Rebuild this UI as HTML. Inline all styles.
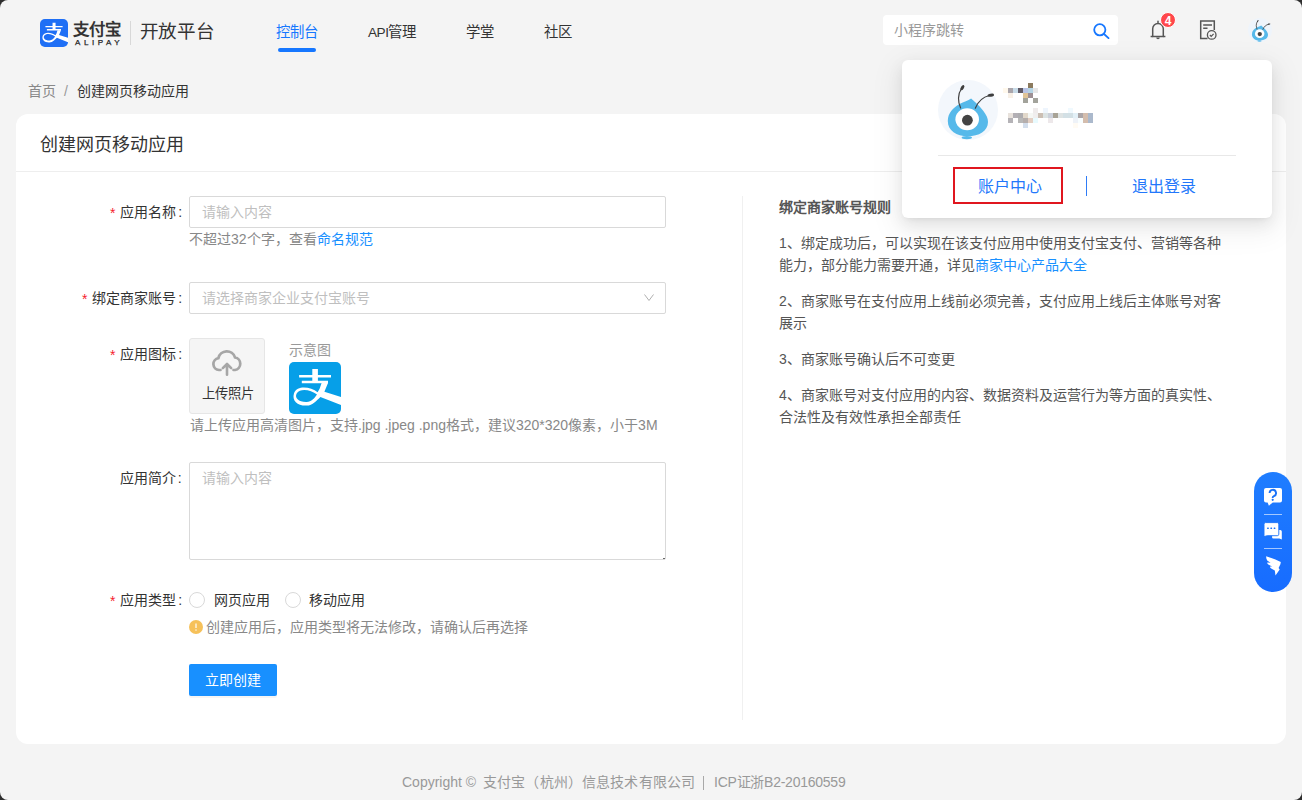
<!DOCTYPE html>
<html lang="zh-CN">
<head>
<meta charset="utf-8">
<style>
*{box-sizing:border-box;margin:0;padding:0}
html,body{width:1302px;height:800px;overflow:hidden;background:#2e2e2e}
body{font-family:"Liberation Sans",sans-serif;color:#333;font-size:14px;line-height:1}
#frame{position:absolute;left:0;top:0;width:1302px;height:800px;background:#f4f4f4;border-radius:8px;overflow:hidden}
.abs{position:absolute;white-space:nowrap}
/* header */
.logo-ic{left:40px;top:19px;width:28px;height:28px}
.logo-zfb{left:73px;top:20.5px;font-size:16.4px;letter-spacing:0.2px;font-weight:bold;color:#333}
.logo-ali{left:75px;top:38.5px;font-size:8px;color:#222;letter-spacing:3.55px;-webkit-text-stroke:0.25px #222}
.logo-sep{left:130px;top:21px;width:1px;height:24px;background:#d8d8d8}
.logo-kf{left:139.5px;top:22.8px;font-size:18.6px;letter-spacing:-0.2px;color:#333}
.nav{top:24.5px;font-size:14.4px;color:#333}
.nav.on{color:#1677ff}
.nav-ul{left:278px;top:48px;width:38px;height:4px;border-radius:2px;background:#1677ff}
.search{left:883px;top:15px;width:235px;height:30px;background:#fff;border-radius:4px}
.search .ph{position:absolute;left:11px;top:8px;font-size:14px;color:#999}
/* card */
.card{left:16px;top:114px;width:1270px;height:630px;background:#fff;border-radius:12px}
.card-title{left:40px;top:136px;font-size:18px;color:#333}
.card-div{left:16px;top:171px;width:1270px;height:1px;background:#eee}
.lbl{font-size:14px;color:#333;text-align:right}
.col{font-weight:normal;margin-left:1.8px}
.req{color:#f5222d;font-size:14px;position:relative;top:1px;margin-right:1px}
.input{left:189px;width:477px;height:32px;border:1px solid #d9d9d9;border-radius:2px;background:#fff}
.input .ph{position:absolute;left:12px;top:8px;font-size:14px;color:#bfbfbf}
.help{font-size:14px;color:#888}
.link{color:#1890ff}
.vdiv{left:742px;top:196px;width:1px;height:524px;background:#f0f0f0}
.rt{left:779px;font-size:14px;color:#555}
.foot{left:402px;top:775px;font-size:14px;color:#999}
/* popup */
.pop{left:902px;top:60px;width:370px;height:158px;background:#fff;border-radius:6px;box-shadow:0 6px 16px 0 rgba(0,0,0,.08),0 3px 6px -4px rgba(0,0,0,.12),0 9px 28px 8px rgba(0,0,0,.05)}
.side{left:1254px;top:472px;width:38px;height:120px;border-radius:19px;background:linear-gradient(180deg,#1f7dff,#176cff)}
</style>
</head>
<body>
<div id="frame">
  <!-- header -->
  <svg class="abs logo-ic" viewBox="0 0 52 52"><rect width="52" height="52" rx="9" fill="#1f6ff5"/><path d="M10.1 13.1H42v2.3H10.1zM23.3 7.1h5.6v12h-5.6zM12.8 18.8H39v2.4H12.8z" fill="#fff"/><path d="M32.6 21H39L35.4 29.8 52 34.9V43.1L31.4 34.9C27.5 38.5 24 43.3 17.5 43.6 9 44 2.5 39 5 31.2 8.5 22.5 22 25 28.6 30.2L30.6 26.8zM28 32.6C22 27.8 11.5 26 7.8 31.2 5 35.8 10 40.3 17.7 40 22.5 39.8 25.5 36.3 28 32.6z" fill="#fff" fill-rule="evenodd"/></svg>
  <div class="abs logo-zfb">支付宝</div>
  <div class="abs logo-ali">ALIPAY</div>
  <div class="abs logo-sep"></div>
  <div class="abs logo-kf">开放平台</div>
  <div class="abs nav on" style="left:276px">控制台</div>
  <div class="abs nav-ul"></div>
  <div class="abs nav" style="left:368px"><span style="letter-spacing:-0.5px;font-size:13.6px">API</span>管理</div>
  <div class="abs nav" style="left:466px">学堂</div>
  <div class="abs nav" style="left:544px">社区</div>
  <div class="abs search"><span class="ph">小程序跳转</span>
    <svg style="position:absolute;left:210px;top:8px" width="17" height="16" viewBox="0 0 17 16"><circle cx="6.8" cy="6.8" r="5.6" fill="none" stroke="#1677ff" stroke-width="1.8"/><path d="M11 11l4.5 4.2" stroke="#1677ff" stroke-width="1.8" stroke-linecap="round"/></svg>
  </div>


  <svg class="abs" style="left:1149px;top:19px" width="18" height="22" viewBox="0 0 18 22"><path d="M9 2.2v1.6M3.7 17.5V9.8a5.3 5.3 0 0 1 10.6 0V17.5" fill="none" stroke="#555" stroke-width="1.5" stroke-linecap="round"/><path d="M1.6 17.5h14.8" stroke="#555" stroke-width="1.5"/><path d="M7.2 18.5a1.8 1.8 0 0 0 3.6 0z" fill="#555"/></svg>
  <div class="abs" style="left:1160px;top:12px;width:16px;height:16px;border-radius:50%;background:#ff474b;border:1px solid #fff;color:#fff;font-size:12px;font-weight:bold;text-align:center;line-height:16.5px">4</div>
  <svg class="abs" style="left:1199px;top:19px" width="19" height="22" viewBox="0 0 19 22"><path d="M8.5 19.5H1.7V2h13.6v9" fill="none" stroke="#555" stroke-width="1.5"/><path d="M4.2 5.9h8.8M4.2 9.2h4.3" stroke="#555" stroke-width="1.5"/><circle cx="12.7" cy="15.9" r="4.3" fill="#f4f4f4" stroke="#555" stroke-width="1.3"/><path d="M10.9 16l1.3 1.3 2.4-2.5" fill="none" stroke="#555" stroke-width="1.2"/></svg>
  <svg class="abs" style="left:1248px;top:18px" width="24" height="24" viewBox="0 0 60 60"><circle cx="30" cy="30" r="30" fill="#eef4fb"/><path d="M33.1 18.6C36 21.5 41 25 45 30.5C48.5 35 50 38 50 42C50 51 41 56.3 29.8 56.3C18.5 56.3 9.8 50.5 9.8 41C9.8 33 15 28 21.5 24C26 21.7 30 21 33.1 18.6Z" fill="#56b9ea"/><ellipse cx="28.8" cy="57.6" rx="5.2" ry="1.7" fill="#56b9ea"/><path d="M22.6 28C19.8 22 19.6 14 23.3 9" fill="none" stroke="#3f3f3f" stroke-width="2" stroke-linecap="round"/><path d="M37.3 28.2C40 21.5 45 17 51.5 15.5" fill="none" stroke="#3f3f3f" stroke-width="2" stroke-linecap="round"/><ellipse cx="24.4" cy="7.6" rx="1.5" ry="2.9" transform="rotate(32 24.4 7.6)" fill="#3f3f3f"/><ellipse cx="52.8" cy="15.2" rx="3.3" ry="1.5" transform="rotate(-10 52.8 15.2)" fill="#3f3f3f"/><ellipse cx="29.2" cy="39.2" rx="11.8" ry="11" fill="#fff"/><circle cx="29.4" cy="40.2" r="5.4" fill="#434343"/></svg>
  <!-- breadcrumb -->
  <div class="abs" style="left:28px;top:84px;font-size:14px;color:#888">首页</div>
  <div class="abs" style="left:64px;top:84px;font-size:14px;color:#999">/</div>
  <div class="abs" style="left:77px;top:84px;font-size:14px;color:#333">创建网页移动应用</div>

  <!-- card -->
  <div class="abs card"></div>
  <div class="abs card-title">创建网页移动应用</div>
  <div class="abs card-div"></div>

  <div class="abs lbl" style="left:110px;top:205px"><span class="req">*</span> 应用名称<b class="col">:</b></div>
  <div class="abs input" style="top:196px"><span class="ph">请输入内容</span></div>
  <div class="abs help" style="left:189px;top:232px">不超过32个字，查看<span class="link">命名规范</span></div>

  <div class="abs lbl" style="left:82px;top:291px"><span class="req">*</span> 绑定商家账号<b class="col">:</b></div>
  <div class="abs input" style="top:282px"><span class="ph">请选择商家企业支付宝账号</span><svg style="position:absolute;left:453px;top:9px" width="12" height="10" viewBox="0 0 12 10"><path d="M1.5 2.5L6 8.5L10.5 2.5" fill="none" stroke="#b0b0b0" stroke-width="1"/></svg></div>

  <div class="abs lbl" style="left:110px;top:347px"><span class="req">*</span> 应用图标<b class="col">:</b></div>

  <div class="abs lbl" style="left:120px;top:471px">应用简介<b class="col">:</b></div>
  <div class="abs input" style="top:462px;height:98px"><span class="ph">请输入内容</span><i style="position:absolute;left:473px;top:94.5px;width:1.5px;height:1.5px;border-radius:50%;background:#555"></i></div>

  <div class="abs lbl" style="left:110px;top:593px"><span class="req">*</span> 应用类型<b class="col">:</b></div>

  <div class="abs" style="left:189px;top:664px;width:88px;height:32px;background:#1890ff;border-radius:2px;box-shadow:0 2px 0 rgba(0,0,0,0.04);color:#fff;font-size:14px;text-align:center;line-height:32px">立即创建</div>


  <div class="abs" style="left:189px;top:338px;width:76px;height:76px;background:#f5f5f5;border:1px solid #e6e6e6;border-radius:3px"></div>
  <svg class="abs" style="left:211px;top:350px" width="32" height="27" viewBox="0 0 32 27"><path d="M9.5 20H8a6 6 0 0 1-.6-11.9A8.6 8.6 0 0 1 24 7.4a6.4 6.4 0 0 1 0 12.6h-1.5" fill="none" stroke="#a6a6a6" stroke-width="2.7" stroke-linecap="round"/><path d="M16 24.8V14M11.8 18.2l4.2-4.2 4.2 4.2" fill="none" stroke="#a6a6a6" stroke-width="2.6" stroke-linecap="round" stroke-linejoin="round"/></svg>
  <div class="abs" style="left:201.5px;top:386.5px;font-size:13.3px;color:#333">上传照片</div>
  <div class="abs" style="left:289px;top:343px;font-size:14px;color:#999">示意图</div>
  <svg class="abs" style="left:289px;top:362px" width="52" height="52" viewBox="0 0 52 52"><rect width="52" height="52" rx="5" fill="#069fe8"/><path d="M10.1 13.1H42v2.3H10.1zM23.3 7.1h5.6v12h-5.6zM12.8 18.8H39v2.4H12.8z" fill="#fff"/><path d="M32.6 21H39L35.4 29.8 52 34.9V43.1L31.4 34.9C27.5 38.5 24 43.3 17.5 43.6 9 44 2.5 39 5 31.2 8.5 22.5 22 25 28.6 30.2L30.6 26.8zM28 32.6C22 27.8 11.5 26 7.8 31.2 5 35.8 10 40.3 17.7 40 22.5 39.8 25.5 36.3 28 32.6z" fill="#fff" fill-rule="evenodd"/></svg>
  <div class="abs help" style="left:190px;top:418px">请上传应用高清图片，支持.jpg .jpeg .png格式，建议320*320像素，小于3M</div>

  <div class="abs" style="left:189px;top:592px;width:16px;height:16px;border:1px solid #d9d9d9;border-radius:50%;background:#fff"></div>
  <div class="abs" style="left:214px;top:593px;font-size:14px;color:#333">网页应用</div>
  <div class="abs" style="left:285px;top:592px;width:16px;height:16px;border:1px solid #d9d9d9;border-radius:50%;background:#fff"></div>
  <div class="abs" style="left:309px;top:593px;font-size:14px;color:#333">移动应用</div>
  <svg class="abs" style="left:189px;top:620px" width="14" height="14" viewBox="0 0 14 14"><circle cx="7" cy="7" r="7" fill="#f6c15a"/><path d="M7 3.6v4.4" stroke="#fff" stroke-opacity="0.8" stroke-width="1.5"/><circle cx="7" cy="10.1" r="0.8" fill="#fff" fill-opacity="0.8"/></svg>
  <div class="abs help" style="left:206px;top:620px">创建应用后，应用类型将无法修改，请确认后再选择</div>
  <div class="abs vdiv"></div>
  <div class="abs rt" style="top:200px;font-weight:bold">绑定商家账号规则</div>


  <div class="abs rt" style="top:236px">1、绑定成功后，可以实现在该支付应用中使用支付宝支付、营销等各种</div>
  <div class="abs rt" style="top:258px">能力，部分能力需要开通，详见<span class="link">商家中心产品大全</span></div>
  <div class="abs rt" style="top:294px">2、商家账号在支付应用上线前必须完善，支付应用上线后主体账号对客</div>
  <div class="abs rt" style="top:316px">展示</div>
  <div class="abs rt" style="top:352px">3、商家账号确认后不可变更</div>
  <div class="abs rt" style="top:388px">4、商家账号对支付应用的内容、数据资料及运营行为等方面的真实性、</div>
  <div class="abs rt" style="top:410px">合法性及有效性承担全部责任</div>
  <div class="abs foot" style="left:402px">Copyright ©</div>
  <div class="abs foot" style="left:483px;letter-spacing:0.14px">支付宝（杭州）信息技术有限公司</div>
  <div class="abs" style="left:703px;top:776px;width:1px;height:14px;background:#a8a8a8"></div>
  <div class="abs foot" style="left:714px;letter-spacing:-0.25px">ICP证浙B2-20160559</div>

  <!-- side widget -->
  <div class="abs side">
    <svg style="position:absolute;left:10px;top:16px" width="18" height="18" viewBox="0 0 18 18"><path d="M2 0h14a2 2 0 0 1 2 2v10.4a2 2 0 0 1-2 2H8.8L4.9 17.7 3.6 14.4H2a2 2 0 0 1-2-2V2a2 2 0 0 1 2-2z" fill="#fff"/><path d="M5.6 5a3.2 3.2 0 1 1 4.4 3c-.9.4-1.3.8-1.3 1.7v.4" fill="none" stroke="#1a72f8" stroke-width="1.9"/><circle cx="8.7" cy="11.8" r="1.1" fill="#1a72f8"/></svg>
    <div style="position:absolute;left:10px;top:42px;width:18px;height:1px;background:rgba(255,255,255,0.6)"></div>
    <svg style="position:absolute;left:10px;top:50px" width="19" height="19" viewBox="0 0 19 19"><path d="M9.5 8h6.8A1.5 1.5 0 0 1 17.8 9.5V17.6l-2.4-1.2H9.5A1.5 1.5 0 0 1 8 14.9z" fill="#fff"/><path d="M1.5 0.6h11.8a1.5 1.5 0 0 1 1.5 1.5v10.1a1.5 1.5 0 0 1-1.5 1.5H3.2L0 14.6V2.1A1.5 1.5 0 0 1 1.5 0.6z" fill="#fff" stroke="#1a72f8" stroke-width="0.9"/><rect x="3.1" y="5.5" width="1.7" height="1.6" rx="0.5" fill="#1a72f8"/><rect x="6.4" y="5.5" width="1.7" height="1.6" rx="0.5" fill="#1a72f8"/><rect x="9.7" y="5.5" width="1.7" height="1.6" rx="0.5" fill="#1a72f8"/></svg>
    <div style="position:absolute;left:10px;top:76px;width:18px;height:1px;background:rgba(255,255,255,0.6)"></div>
    <svg style="position:absolute;left:8px;top:78px" width="24" height="30" viewBox="0 0 24 30"><path d="M4.1 6.2C9 7.8 14 9.8 18.8 12L18.4 14.3 16.6 18 17.7 19.4 13.5 25.5 12.8 20.5 9.2 18.5C8.2 17.9 7.9 17.3 8.1 16.6L10.2 16.6 6.3 14.6C5.4 14 5.1 13.2 5.3 12.4L8.5 12.7 5.2 10.6C4.4 9.2 4.1 7.8 4.1 6.2Z" fill="#fff"/></svg>
  </div>

  <!-- popup -->
  <div class="abs pop"></div>
  <svg class="abs" style="left:938px;top:80px" width="60" height="60" viewBox="0 0 60 60"><circle cx="30" cy="30" r="30" fill="#f3f7fc"/><path d="M33.1 18.6C36 21.5 41 25 45 30.5C48.5 35 50 38 50 42C50 51 41 56.3 29.8 56.3C18.5 56.3 9.8 50.5 9.8 41C9.8 33 15 28 21.5 24C26 21.7 30 21 33.1 18.6Z" fill="#56b9ea"/><ellipse cx="28.8" cy="57.6" rx="5.2" ry="1.7" fill="#56b9ea"/><path d="M22.6 28C19.8 22 19.6 14 23.3 9" fill="none" stroke="#3f3f3f" stroke-width="1.2" stroke-linecap="round"/><path d="M37.3 28.2C40 21.5 45 17 51.5 15.5" fill="none" stroke="#3f3f3f" stroke-width="1.2" stroke-linecap="round"/><ellipse cx="24.4" cy="7.6" rx="1.5" ry="2.9" transform="rotate(32 24.4 7.6)" fill="#3f3f3f"/><ellipse cx="52.8" cy="15.2" rx="3.3" ry="1.5" transform="rotate(-10 52.8 15.2)" fill="#3f3f3f"/><ellipse cx="29.2" cy="39.2" rx="11.8" ry="11" fill="#fff"/><circle cx="29.4" cy="40.2" r="5.4" fill="#434343"/></svg>
  <div class="abs" style="left:938px;top:155px;width:298px;height:1px;background:#e8e8e8"></div>
  <div class="abs" style="left:953px;top:167px;width:110px;height:37px;border:2px solid #e0161f"></div>
  <div class="abs" style="left:978px;top:179px;font-size:16px;color:#2277fb">账户中心</div>
  <div class="abs" style="left:1086px;top:176px;width:1px;height:20px;background:#2f7cf6"></div>
  <div class="abs" style="left:1132px;top:179px;font-size:16px;color:#2277fb">退出登录</div>
  <div class="abs" style="left:1003px;top:83px;width:90px;height:45px">
    <i style="position:absolute;left:25px;top:0px;width:5px;height:5px;background:#8b7a5e"></i>
    <i style="position:absolute;left:0px;top:5px;width:5px;height:5px;background:#fff8ec"></i>
    <i style="position:absolute;left:5px;top:5px;width:5px;height:5px;background:#aaa5ab"></i>
    <i style="position:absolute;left:10px;top:5px;width:5px;height:5px;background:#c8dbe8"></i>
    <i style="position:absolute;left:15px;top:5px;width:5px;height:5px;background:#5f5a66"></i>
    <i style="position:absolute;left:20px;top:5px;width:5px;height:5px;background:#b8c4e6"></i>
    <i style="position:absolute;left:25px;top:5px;width:5px;height:5px;background:#b5d4e4"></i>
    <i style="position:absolute;left:30px;top:5px;width:5px;height:5px;background:#e6e6e6"></i>
    <i style="position:absolute;left:5px;top:10px;width:5px;height:5px;background:#f8f0e6"></i>
    <i style="position:absolute;left:20px;top:10px;width:5px;height:5px;background:#e0c497"></i>
    <i style="position:absolute;left:25px;top:10px;width:5px;height:5px;background:#9e9094"></i>
    <i style="position:absolute;left:20px;top:15px;width:5px;height:5px;background:#a3a39b"></i>
    <i style="position:absolute;left:30px;top:15px;width:5px;height:5px;background:#a3a39b"></i>
    <i style="position:absolute;left:30px;top:25px;width:5px;height:5px;background:#efebeb"></i>
    <i style="position:absolute;left:40px;top:25px;width:5px;height:5px;background:#eef5fd"></i>
    <i style="position:absolute;left:65px;top:25px;width:5px;height:5px;background:#f0f9fe"></i>
    <i style="position:absolute;left:5px;top:30px;width:5px;height:5px;background:#e8e2dc"></i>
    <i style="position:absolute;left:10px;top:30px;width:5px;height:5px;background:#b3b0b5"></i>
    <i style="position:absolute;left:15px;top:30px;width:5px;height:5px;background:#aeadb0"></i>
    <i style="position:absolute;left:20px;top:30px;width:5px;height:5px;background:#e2d8ca"></i>
    <i style="position:absolute;left:25px;top:30px;width:5px;height:5px;background:#f5f7f4"></i>
    <i style="position:absolute;left:30px;top:30px;width:5px;height:5px;background:#f0eeee"></i>
    <i style="position:absolute;left:35px;top:30px;width:5px;height:5px;background:#cbbfb4"></i>
    <i style="position:absolute;left:40px;top:30px;width:5px;height:5px;background:#dce3e3"></i>
    <i style="position:absolute;left:45px;top:30px;width:5px;height:5px;background:#cbd0da"></i>
    <i style="position:absolute;left:50px;top:30px;width:5px;height:5px;background:#a8a396"></i>
    <i style="position:absolute;left:55px;top:30px;width:5px;height:5px;background:#dee3e3"></i>
    <i style="position:absolute;left:60px;top:30px;width:5px;height:5px;background:#d3e0e5"></i>
    <i style="position:absolute;left:65px;top:30px;width:5px;height:5px;background:#d3e0e5"></i>
    <i style="position:absolute;left:70px;top:30px;width:5px;height:5px;background:#e2f0f7"></i>
    <i style="position:absolute;left:75px;top:30px;width:5px;height:5px;background:#aca6a8"></i>
    <i style="position:absolute;left:80px;top:30px;width:5px;height:5px;background:#d4bdad"></i>
    <i style="position:absolute;left:85px;top:30px;width:5px;height:5px;background:#abb9cc"></i>
    <i style="position:absolute;left:5px;top:35px;width:5px;height:5px;background:#b5b3b7"></i>
    <i style="position:absolute;left:15px;top:35px;width:5px;height:5px;background:#b8b8b8"></i>
    <i style="position:absolute;left:20px;top:35px;width:5px;height:5px;background:#b5aeac"></i>
    <i style="position:absolute;left:25px;top:35px;width:5px;height:5px;background:#e3cfc3"></i>
    <i style="position:absolute;left:30px;top:35px;width:5px;height:5px;background:#e8fafe"></i>
    <i style="position:absolute;left:45px;top:35px;width:5px;height:5px;background:#ede8ea"></i>
    <i style="position:absolute;left:70px;top:35px;width:5px;height:5px;background:#eef2f8"></i>
    <i style="position:absolute;left:75px;top:35px;width:5px;height:5px;background:#f8feff"></i>
    <i style="position:absolute;left:80px;top:35px;width:5px;height:5px;background:#d4bdad"></i>
    <i style="position:absolute;left:85px;top:35px;width:5px;height:5px;background:#abb9cc"></i>
    <i style="position:absolute;left:20px;top:40px;width:5px;height:5px;background:#d3deec"></i>
    <i style="position:absolute;left:70px;top:40px;width:5px;height:5px;background:#fffbf4"></i>
  </div>
</div>
</body>
</html>
